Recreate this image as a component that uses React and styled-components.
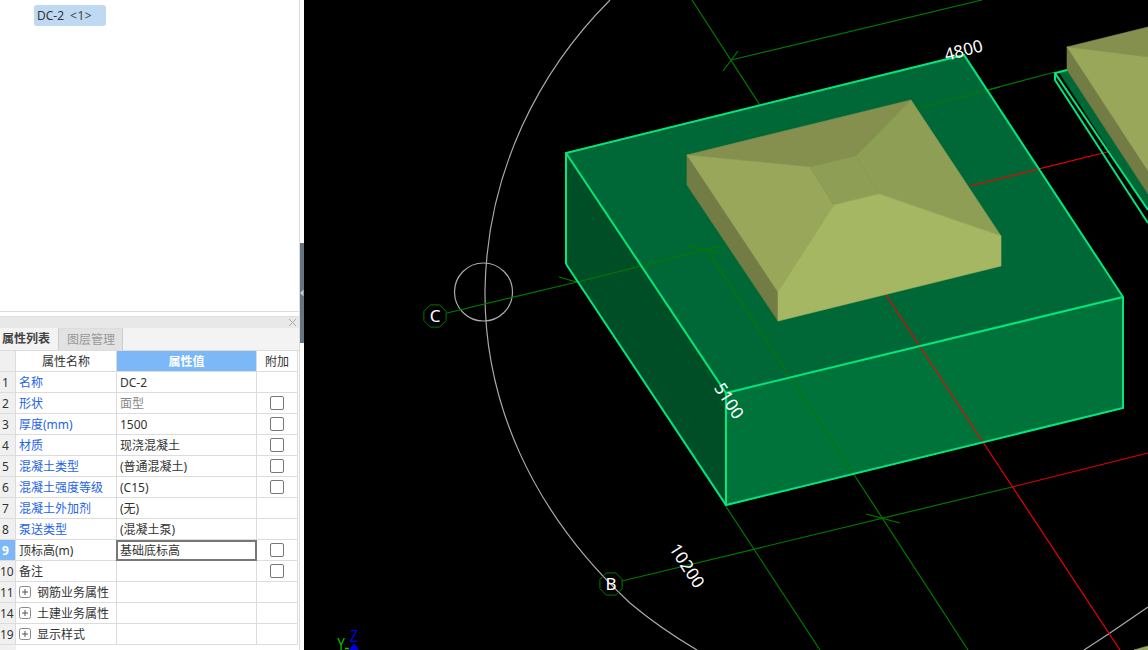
import React from "react";
import styled, { createGlobalStyle } from "styled-components";

const Global = createGlobalStyle`
  html, body { margin: 0; padding: 0; overflow: hidden; background: #fff; }
  #root { width: 1148px; height: 650px; }
`;

const Page = styled.div`
  display: flex;
  width: 1148px;
  height: 650px;
  overflow: hidden;
  font-family: "Noto Sans", "Noto Sans CJK SC", sans-serif;
  font-size: 12px;
  color: #333;
`;

const LeftPanel = styled.aside`
  width: 300px;
  height: 650px;
  flex: none;
  display: flex;
  flex-direction: column;
  box-sizing: border-box;
  border-right: 1px solid #dcdcdc;
  background: #fff;
`;

const TreeArea = styled.div`
  height: 312px;
  flex: none;
  box-sizing: border-box;
  padding: 5px 0 0 34px;
  border-bottom: 1px solid #dcdcdc;
`;

const Chip = styled.div`
  display: inline-flex;
  align-items: center;
  gap: 6px;
  width: 72px;
  height: 21px;
  box-sizing: border-box;
  padding-left: 3px;
  background: #c0d9f3;
  border-radius: 3px;
  white-space: nowrap;
  line-height: 21px;
`;

const ChipCount = styled.span`
  font-size: 12px;
  letter-spacing: 0.5px;
  color: #444;
`;

const Gap = styled.div`
  height: 4px;
  flex: none;
`;

const TitleBar = styled.div`
  height: 12px;
  flex: none;
  display: flex;
  align-items: center;
  justify-content: flex-end;
  padding-right: 2px;
  background: #e8e8e8;
  border-top: 1px solid #dedede;
  box-sizing: border-box;
`;

const TabStrip = styled.div`
  height: 23px;
  flex: none;
  display: flex;
  background: #f3f3f3;
  box-sizing: border-box;
`;

const Tab = styled.div`
  height: 23px;
  box-sizing: border-box;
  width: ${(p) => (p.$active ? "58px" : "65px")};
  padding-left: ${(p) => (p.$active ? "2px" : "8px")};
  line-height: 22px;
  white-space: nowrap;
  font-weight: ${(p) => (p.$active ? 700 : 400)};
  color: ${(p) => (p.$active ? "#444" : "#999")};
  background: ${(p) => (p.$active ? "#f3f3f3" : "#e2e2e2")};
  border-right: ${(p) => (p.$active ? "none" : "1px solid #ccc")};
  border-left: ${(p) => (p.$active ? "none" : "1px solid #ccc")};
  border-top: ${(p) => (p.$active ? "none" : "1px solid #ddd")};
`;

const TableWrap = styled.div`
  flex: 1;
  display: flex;
  background: linear-gradient(to right, #f0f0f0 16px, #fff 16px);
  border-top: 1px solid #dcdcdc;
  margin-top: -1px;
`;

const Table = styled.div`
  width: 298px;
  display: grid;
  grid-template-columns: 16px 101px 140px 41px;
  grid-auto-rows: 21px;
  align-content: start;
`;

const Cell = styled.div`
  box-sizing: border-box;
  display: flex;
  align-items: center;
  padding-left: 3px;
  padding-top: 2px;
  border-right: 1px solid #dcdcdc;
  border-bottom: 1px solid #dcdcdc;
  white-space: nowrap;
  line-height: 18px;
`;

const NumCell = styled(Cell)`
  padding-left: ${(p) => (p.$wide ? "0" : "2px")};
  justify-content: flex-start;
  overflow: hidden;
  background: ${(p) => (p.$active ? "#7cb8f8" : "#f0f0f0")};
  color: ${(p) => (p.$active ? "#fff" : "#333")};
  font-weight: ${(p) => (p.$active ? 700 : 400)};
`;

const NameCell = styled(Cell)`
  color: ${(p) => (p.$blue ? "#1f63e6" : "#333")};
  gap: 6px;
`;

const ValueCell = styled(Cell)`
  color: ${(p) => (p.$muted ? "#888" : "#333")};
  ${(p) =>
    p.$editing &&
    "border: 2px solid #777; margin-left: -1px; padding-left: 2px; padding-top: 0;"}
`;

const HeadCell = styled(Cell)`
  justify-content: center;
  padding-left: 0;
  background: ${(p) => (p.$active ? "#7cb8f8" : "#fff")};
  color: ${(p) => (p.$active ? "#fff" : "#333")};
  font-weight: ${(p) => (p.$active ? 700 : 400)};
`;

const ExtraCell = styled(Cell)`
  justify-content: center;
  padding: 0;
`;

const Check = styled.span`
  width: 14px;
  height: 14px;
  box-sizing: border-box;
  border: 1px solid #777;
  border-radius: 2px;
  background: #fff;
`;

const Plus = styled.svg`
  width: 12px;
  height: 12px;
  flex: none;
  margin-top: -2px;
`;

const Splitter = styled.div`
  width: 4px;
  flex: none;
  display: flex;
  align-items: center;
  background: #fff;
`;

const Handle = styled.div`
  width: 4px;
  height: 100px;
  margin-top: -64px;
  background: #667480;
  display: flex;
  align-items: center;
  justify-content: center;
`;

const Canvas = styled.main`
  flex: 1;
  height: 650px;
  background: #000;
`;

const Drawing = styled.svg`
  display: block;
  width: 844px;
  height: 650px;
`;

const rows = [
  { n: "1", name: "名称", blue: true, value: "DC-2", check: false },
  { n: "2", name: "形状", blue: true, value: "面型", muted: true, check: true },
  { n: "3", name: "厚度(mm)", blue: true, value: "1500", check: true },
  { n: "4", name: "材质", blue: true, value: "现浇混凝土", check: true },
  { n: "5", name: "混凝土类型", blue: true, value: "(普通混凝土)", check: true },
  { n: "6", name: "混凝土强度等级", blue: true, value: "(C15)", check: true },
  { n: "7", name: "混凝土外加剂", blue: true, value: "(无)", check: false },
  { n: "8", name: "泵送类型", blue: true, value: "(混凝土泵)", check: false },
  { n: "9", name: "顶标高(m)", value: "基础底标高", check: true, active: true },
  { n: "10", name: "备注", value: "", check: true },
  { n: "11", name: "钢筋业务属性", value: "", plus: true },
  { n: "14", name: "土建业务属性", value: "", plus: true },
  { n: "19", name: "显示样式", value: "", plus: true },
];

const PlusIcon = () => (
  <Plus viewBox="0 0 12 12">
    <rect x="0.5" y="0.5" width="11" height="11" rx="2" fill="#fff" stroke="#888" />
    <path d="M3 6h6M6 3v6" stroke="#555" fill="none" />
  </Plus>
);

const BRIGHT = "#00e87c";
const GRID = "#007a00";
const RED = "#f00000";
const WHITE = "#aaaaaa";

const Face = ({ points, fill }) => (
  <polygon points={points} fill={fill} stroke={fill} strokeWidth="0.6" strokeLinejoin="round" />
);

const Bubble = ({ x, y, label }) => {
  const pts = Array.from({ length: 8 }, (_, i) => {
    const a = (Math.PI / 4) * i + Math.PI / 8;
    return `${(x + 12 * Math.cos(a)).toFixed(1)},${(y + 12 * Math.sin(a)).toFixed(1)}`;
  }).join(" ");
  return (
    <g>
      <polygon points={pts} fill="none" stroke={GRID} strokeWidth="1" />
      <text x={x} y={y + 6} textAnchor="middle" fill="#fff" fontFamily="Noto Sans, sans-serif" fontSize="17">
        {label}
      </text>
    </g>
  );
};

const Dim = ({ x, y, r, children }) => (
  <text
    transform={`translate(${x} ${y}) rotate(${r})`}
    textAnchor="middle"
    fill="#fff"
    fontFamily="Noto Sans, sans-serif"
    fontSize="17"
  >
    {children}
  </text>
);

const Scene = () => (
  <Drawing viewBox="304 0 844 650">
    {/* big circle */}
    <g fill="none" stroke={WHITE} strokeWidth="1.2">
      <path d="M610 0C540 70 487 170 485 290C484 400 530 510 630 603C650 620 675 637 697 650" />
      <path d="M1084 650L1110 633L1148 607" />
      <circle cx="483.5" cy="292" r="29" />
    </g>

    {/* grid below the slab */}
    <g stroke={GRID} strokeWidth="1.2" fill="none">
      <path d="M692 0L778 133" />
      <path d="M731 60L982 0" />
      <path d="M723 71L738 51" />
      <path d="M447 313L577 282" />
      <path d="M559 277L594 287" />
      <path d="M622 581L1012 487" />
      <path d="M866 514L900 523" />
      <path d="M725 505L820 650" />
      <path d="M853 473L968 650" />
      <path d="M987 90L1055 72" />
    </g>

    {/* slab */}
    <Face points="566,153 726,393 726,505 566,264" fill="#004e25" />
    <Face points="566,153 964,55 1123,297 726,393" fill="#006837" />
    <Face points="726,393 1123,297 1123,408 726,505" fill="#00733b" />

    {/* grid seen through the slab */}
    <g strokeWidth="1.2" fill="none">
      <path d="M577 282L725 245" stroke={GRID} />
      <path d="M689 246L723 254" stroke={GRID} />
      <path d="M707 250L853 473" stroke={GRID} />
      <path d="M918 108L1000 87" stroke={GRID} />
      <path d="M886 295L1120 650" stroke={RED} />
      <path d="M1012 487L1148 453" stroke={RED} />
      <path d="M970 186L1115 150" stroke={RED} />
    </g>

    <g stroke={BRIGHT} fill="none" strokeWidth="2">
      <path d="M566 264V153L964 55L1123 297V408L726 505L566 264" />
      <path d="M566 153L726 393L1123 297" />
      <path d="M726 393V505" />
    </g>

    {/* pedestal */}
    <Face points="687,155 778,292 778,321 687,185" fill="#727c44" />
    <Face points="687,155 911,100 856,156 810,167" fill="#85904f" />
    <Face points="687,155 810,167 834,205 778,292" fill="#98a75a" />
    <Face points="911,100 1001,236 879,194 856,156" fill="#8f9e55" />
    <Face points="810,167 856,156 879,194 834,205" fill="#8f9e55" />
    <Face points="778,321 778,292 834,205 879,194 1001,236 1001,266" fill="#a5b762" />

    {/* second foundation */}
    <Face points="1059,72 1067,70 1148,194 1148,210" fill="#006837" />
    <Face points="1067,47 1067,70 1148,194 1148,171" fill="#727c44" />
    <Face points="1067,47 1148,27 1148,57" fill="#85904f" />
    <Face points="1067,47 1148,57 1148,171" fill="#98a75a" />
    <g stroke={BRIGHT} fill="none" strokeWidth="2">
      <path d="M1067 70L1055 73L1148 210" />
      <path d="M1055 73V80L1148 223" />
    </g>
    <Face points="1134,650 1148,646 1148,650" fill="#98a75a" />

    <Bubble x={435} y={316} label="C" />
    <Bubble x={611} y={584} label="B" />
    <Dim x={965} y={56} r={-15}>4800</Dim>
    <Dim x={724} y={404} r={57}>5100</Dim>
    <Dim x={682} y={569} r={57}>10200</Dim>

    {/* axis triad */}
    <text transform="translate(337 650) scale(0.72 1)" fill="#00d000" fontFamily="Liberation Sans, sans-serif" fontSize="17">Y</text>
    <text transform="translate(350 641.5) scale(0.78 1)" fill="#0000e0" fontFamily="Liberation Sans, sans-serif" fontSize="17">Z</text>
    <polygon points="354,643 349,650 359,650" fill="#0000e0" />
    <path d="M345 648.5H349" stroke="#00d000" strokeWidth="1.5" />
  </Drawing>
);

export default function App() {
  return (
    <Page>
      <Global />
      <LeftPanel>
        <TreeArea>
          <Chip>
            DC-2 <ChipCount>&lt;1&gt;</ChipCount>
          </Chip>
        </TreeArea>
        <Gap />
        <TitleBar>
          <svg width="9" height="9" viewBox="0 0 9 9">
            <path d="M1 1l7 7M8 1L1 8" stroke="#aaa" fill="none" />
          </svg>
        </TitleBar>
        <TabStrip>
          <Tab $active>属性列表</Tab>
          <Tab>图层管理</Tab>
        </TabStrip>
        <TableWrap>
          <Table>
            <NumCell />
            <HeadCell>属性名称</HeadCell>
            <HeadCell $active>属性值</HeadCell>
            <HeadCell>附加</HeadCell>
            {rows.map((r) => (
              <React.Fragment key={r.n}>
                <NumCell $active={r.active} $wide={r.n.length > 1}>{r.n}</NumCell>
                <NameCell $blue={r.blue}>
                  {r.plus && <PlusIcon />}
                  {r.name}
                </NameCell>
                <ValueCell $muted={r.muted} $editing={r.active}>{r.value}</ValueCell>
                <ExtraCell>{r.check && <Check />}</ExtraCell>
              </React.Fragment>
            ))}
          </Table>
        </TableWrap>
      </LeftPanel>
      <Splitter>
        <Handle>
          <svg width="4" height="8" viewBox="0 0 4 8">
            <path d="M3.5 0.5V7.5L0 4Z" fill="#c4cbd0" />
          </svg>
        </Handle>
      </Splitter>
      <Canvas>
        <Scene />
      </Canvas>
    </Page>
  );
}
